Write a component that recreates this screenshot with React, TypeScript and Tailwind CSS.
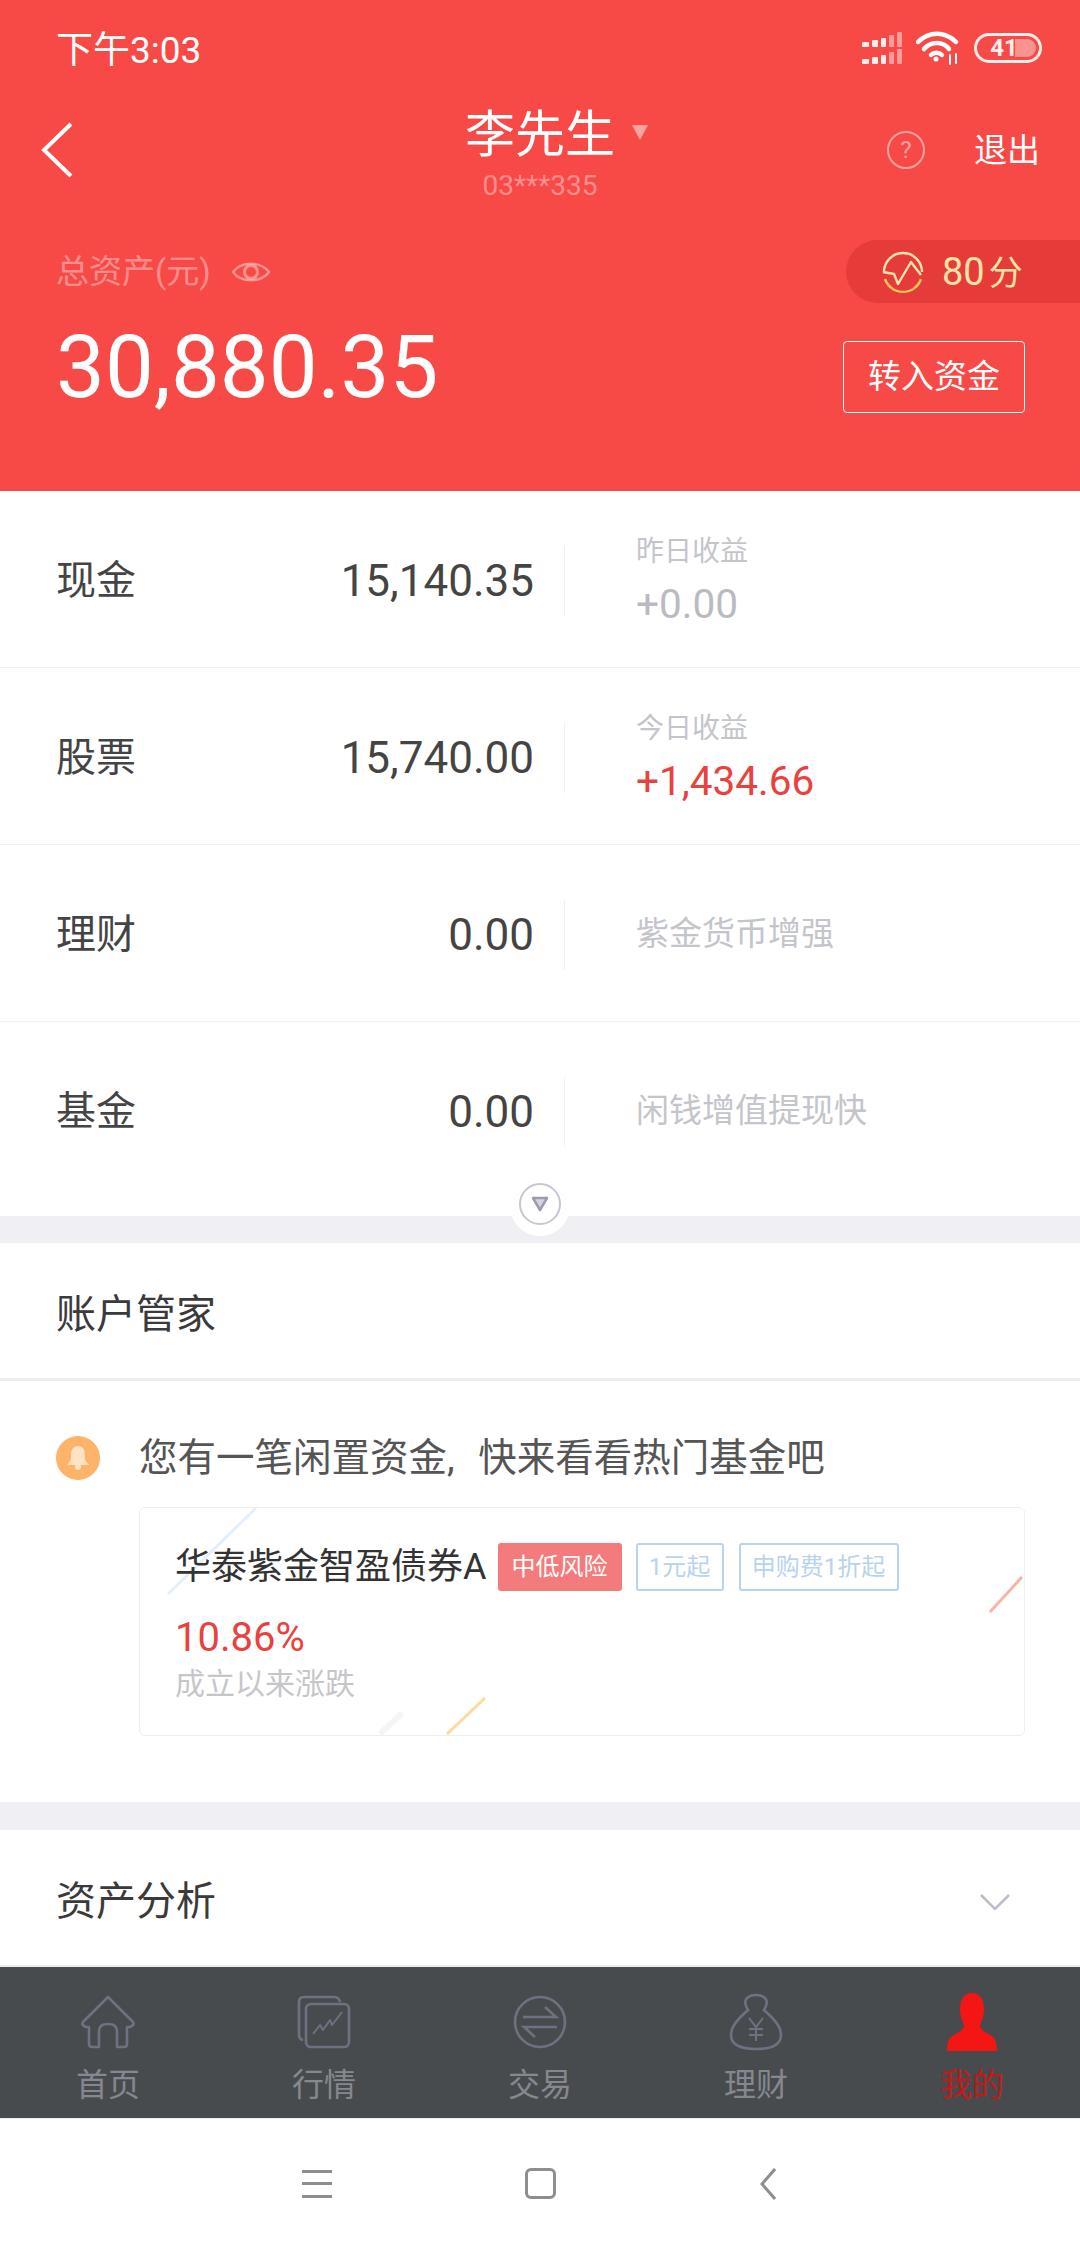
import React from 'react';

const FONT = "font-['Roboto','Noto_Sans_CJK_SC',sans-serif]";

const rows = [
  { label: '现金', value: '15,140.35', title: '昨日收益', amount: '+0.00', amountClass: 'text-[#b9bbc0]' },
  { label: '股票', value: '15,740.00', title: '今日收益', amount: '+1,434.66', amountClass: 'text-[#e8413e]' },
  { label: '理财', value: '0.00', hint: '紫金货币增强' },
  { label: '基金', value: '0.00', hint: '闲钱增值提现快' },
];

const SignalIcon = () => (
  <svg width="40" height="32" viewBox="0 0 40 32">
    {[0, 17].map((y) => (
      <g key={y} transform={`translate(0 ${y})`}>
        <rect x="0" y="10" width="7" height="5" rx="1" fill="#fff" fillOpacity="0.9" />
        <rect x="10" y="8" width="6" height="7" rx="1" fill="#fff" fillOpacity="0.9" />
        <rect x="19" y="6" width="5" height="9" rx="1" fill="#fff" fillOpacity="0.9" />
        <rect x="27" y="3" width="5" height="12" rx="1" fill="#fff" fillOpacity="0.45" />
        <rect x="35" y="0" width="5" height="15" rx="1" fill="#fff" fillOpacity="0.45" />
      </g>
    ))}
  </svg>
);

const WifiIcon = () => (
  <svg width="44" height="34" viewBox="0 0 44 34" fill="none" stroke="#fff" strokeWidth="4.5" strokeLinecap="round">
    <path d="M2 11 C13 0 29 0 40 11" />
    <path d="M8 18 C15 10 27 10 33 18" />
    <path d="M15 24 C18 21 23 21 26 24" />
    <circle cx="20" cy="28" r="2.5" fill="#fff" stroke="none" />
    <path d="M34 24v9M40 23v9" strokeWidth="2" />
  </svg>
);

const Battery = () => (
  <div className="relative h-[30px] w-[68px] overflow-hidden rounded-full border-[3px] border-white/90">
    <div className="absolute inset-y-[3px] left-[38px] right-[3px] rounded-r-full bg-white/40" />
    <div className="relative flex h-full items-center justify-center pr-[8px] text-[24px] font-bold text-white/90">41</div>
  </div>
);

const ScoreIcon = () => (
  <svg width="44" height="44" viewBox="0 0 44 44" fill="none" stroke="#fde3a7" strokeWidth="2.4">
    <path d="M3 22 A19 19 0 0 1 41 22" />
    <path d="M4 29 A19 19 0 0 0 40 29" stroke="#fbc65c" />
    <path d="M2 22 L13 24 L17 34 L30 12 L40 25" strokeLinejoin="round" />
  </svg>
);

const EyeIcon = () => (
  <svg width="40" height="24" viewBox="0 0 40 24" fill="none" stroke="#fff" strokeOpacity="0.4" strokeWidth="2.5">
    <path d="M2 12 C10 1 30 1 38 12 C30 23 10 23 2 12 Z" />
    <circle cx="20" cy="12" r="6.5" strokeWidth="3" />
  </svg>
);

const HomeIcon = () => (
  <svg width="56" height="56" viewBox="0 0 56 56" fill="none" stroke="#6e7180" strokeWidth="2.6" strokeLinejoin="round">
    <path d="M28 3 L53 28 Q55 31 50 33 H47 V50 Q47 53 44 53 H37 V37 Q37 30 28 30 Q19 30 19 37 V53 H12 Q9 53 9 50 V33 H6 Q1 31 3 28 Z" />
  </svg>
);

const MarketIcon = () => (
  <svg width="56" height="56" viewBox="0 0 56 56" fill="none" stroke="#6e7180" strokeWidth="2.6" strokeLinejoin="round">
    <path d="M7 46 Q3 45 3 41 V8 Q3 3 8 3 H38 Q43 3 44 8" />
    <rect x="10" y="10" width="43" height="43" rx="5" />
    <path d="M17 40 L24 31 L27 36 L34 26 L36 31 L46 18" strokeWidth="2" />
  </svg>
);

const TradeIcon = () => (
  <svg width="54" height="54" viewBox="0 0 54 54" fill="none" stroke="#6e7180" strokeWidth="2.6">
    <circle cx="27" cy="27" r="25" />
    <path d="M10 22 H43 L32 12" />
    <path d="M44 32 H11 L22 42" />
  </svg>
);

const MoneyBagIcon = () => (
  <svg width="54" height="58" viewBox="0 0 54 58" fill="none" stroke="#6e7180" strokeWidth="2.6">
    <path d="M19 17 C12 6 20 2 27 2 C34 2 42 6 35 17 C44 25 52 33 52 42 C52 52 42 56 27 56 C12 56 2 52 2 42 C2 33 10 25 19 17 Z" />
    <path d="M20 25 L27 34 L34 25 M27 34 V48 M20 36 H34 M20 42 H34" strokeWidth="2" />
  </svg>
);

const PersonIcon = () => (
  <svg width="52" height="58" viewBox="0 0 52 58" fill="#f41515">
    <path d="M26 0 C35 0 38 8 38 17 C38 24 35 28 34 33 C35 38 42 40 47 44 C50 47 51 52 51 58 H1 C1 52 2 47 5 44 C10 40 17 38 18 33 C17 28 14 24 14 17 C14 8 17 0 26 0 Z" />
  </svg>
);

const tabs = [
  { label: '首页', icon: <HomeIcon /> },
  { label: '行情', icon: <MarketIcon /> },
  { label: '交易', icon: <TradeIcon /> },
  { label: '理财', icon: <MoneyBagIcon /> },
  { label: '我的', icon: <PersonIcon />, active: true },
];

const App = () => {
  return (
    <div className={`flex h-[2248px] w-[1080px] flex-col overflow-hidden bg-white ${FONT}`}>
      {/* 头部 */}
      <div className="h-[491px] shrink-0 bg-[#f74a47] pl-14 text-white">
        <div className="flex h-[96px] items-center justify-between pr-[38px]">
          <span className="pt-[4px] text-[37px] leading-none">下午3:03</span>
          <div className="flex items-center gap-[14px]">
            <SignalIcon />
            <WifiIcon />
            <Battery />
          </div>
        </div>

        <div className="relative flex h-[112px] flex-col items-center pr-14">
          <svg className="absolute left-[-16px] top-[26px]" width="34" height="56" viewBox="0 0 34 56" fill="none" stroke="#fff" strokeWidth="4">
            <path d="M31 2 L4 28 L31 54" />
          </svg>
          <div className="relative mt-[11px] text-[50px] leading-[56px]">
            李先生
            <span className="absolute left-[167px] top-[18px] h-0 w-0 border-x-[8px] border-t-[15px] border-x-transparent border-t-white/50" />
          </div>
          <div className="mt-[7px] text-[28px] leading-[32px] text-white/40">03***335</div>
          <div className="absolute right-10 top-[35px] flex items-center gap-[49px]">
            <div className="flex h-[38px] w-[38px] items-center justify-center rounded-full border-2 border-white/50 text-[24px] leading-none text-white/50">?</div>
            <span className="text-[33px] leading-none">退出</span>
          </div>
        </div>

        <div className="mt-[32px] flex h-[63px] items-center justify-between">
          <div className="flex items-center gap-[20px]">
            <span className="text-[33px] leading-none text-white/40">总资产(元)</span>
            <EyeIcon />
          </div>
          <div className="flex h-[63px] w-[234px] items-center gap-[17px] rounded-l-full bg-[#e53c3a] pl-[35px] text-[#fde3a7]">
            <ScoreIcon />
            <span className="text-[38px] leading-none">
              80<span className="ml-[4px] text-[34px]">分</span>
            </span>
          </div>
        </div>

        <div className="mt-[38px] flex items-start justify-between pr-[55px]">
          <span className="-mt-[10px] text-[87px] leading-[72px]">30,880.35</span>
          <button className="flex h-[72px] w-[182px] items-center justify-center rounded-[4px] border border-white text-[33px] text-white">
            转入资金
          </button>
        </div>
      </div>

      {/* 资产列表 */}
      <div className="relative shrink-0">
        {rows.map((row, i) => (
          <div
            key={row.label}
            className={`flex items-center pl-14 ${i < rows.length - 1 ? 'h-[177px] border-b border-[#f0f0f3] pt-[3px]' : 'h-[194px] pb-[15px]'}`}
          >
            <span className="w-[120px] text-[40px] leading-none text-[#444]">{row.label}</span>
            <span className="w-[358px] text-right text-[44px] leading-none text-[#444]">{row.value}</span>
            <div className="ml-[30px] h-[70px] w-px bg-[#f0f0f3]" />
            <div className="ml-[71px]">
              {row.hint ? (
                <span className="text-[33px] leading-none text-[#c4c5ca]">{row.hint}</span>
              ) : (
                <div className="flex flex-col gap-[13px]">
                  <span className="text-[28px] leading-[34px] text-[#c4c5ca]">{row.title}</span>
                  <span className={`text-[40.5px] leading-[44px] ${row.amountClass}`}>{row.amount}</span>
                </div>
              )}
            </div>
          </div>
        ))}
      </div>

      {/* 展开按钮 */}
      <div className="relative h-[27px] shrink-0 bg-[#f0f0f4]">
        <div className="absolute left-[510px] top-[-44px] flex h-[64px] w-[60px] items-center justify-center rounded-full bg-white">
          <div className="flex h-[42px] w-[42px] items-center justify-center rounded-full border-2 border-[#c6c7d0]">
            <svg width="18" height="16" viewBox="0 0 18 16">
              <path d="M2 2 H16 L9 14 Z" fill="#d4d5de" stroke="#9b9dae" strokeWidth="2.5" strokeLinejoin="round" />
            </svg>
          </div>
        </div>
      </div>

      {/* 账户管家 */}
      <div className="flex h-[138px] shrink-0 items-center border-b-[3px] border-[#eeeef0] pl-14 pt-[8px] text-[40px] leading-none text-[#3a3a3a]">
        账户管家
      </div>
      <div className="h-[421px] shrink-0 pl-14 pr-[55px] pt-[55px]">
        <div className="flex h-[44px] items-center gap-[39px]">
          <div className="flex h-[44px] w-[44px] shrink-0 items-center justify-center rounded-full bg-[#fdb368]">
            <svg width="24" height="26" viewBox="0 0 24 26" fill="#ffe3c2">
              <path d="M12 1 C17 1 19 5 19 10 V15 L23 20 H1 L5 15 V10 C5 5 7 1 12 1 Z" />
              <circle cx="12" cy="22" r="3" />
            </svg>
          </div>
          <span className="text-[38.5px] leading-none text-[#555] [word-spacing:14px]">您有一笔闲置资金, 快来看看热门基金吧</span>
        </div>

        <div className="relative ml-[83px] mt-[27px] h-[229px] overflow-hidden rounded-[6px] border border-[#eeeef0] pl-[35px] pt-[35px]">
          <svg className="absolute left-0 top-0" width="886" height="229" viewBox="0 0 886 229" fill="none" strokeWidth="3">
            <path d="M116 0 L28 86" stroke="#e3f0fb" />
            <path d="M882 69 L850 104" stroke="#f7b3a8" />
            <path d="M345 190 L307 226" stroke="#fbdc9d" />
            <path d="M262 205 L240 226" stroke="#f5f5f6" strokeWidth="6" />
          </svg>
          <div className="relative flex h-[48px] items-center">
            <span className="text-[36px] leading-none text-[#333]">华泰紫金智盈债券A</span>
            <span className="ml-[11px] flex h-[48px] w-[124px] items-center justify-center rounded-[3px] bg-[#f47b7b] text-[24px] text-white">中低风险</span>
            <span className="ml-[14px] flex h-[48px] w-[88px] items-center justify-center rounded-[3px] border-2 border-[#b9d3ee] text-[24px] text-[#b9d3ee]">1元起</span>
            <span className="ml-[15px] flex h-[48px] w-[160px] items-center justify-center rounded-[3px] border-2 border-[#b9d3ee] text-[24px] text-[#b9d3ee]">申购费1折起</span>
          </div>
          <div className="relative mt-[25px] text-[40px] leading-[44px] text-[#e8413e]">10.86%</div>
          <div className="relative mt-[6px] text-[30px] leading-[36px] text-[#c6c6c9]">成立以来涨跌</div>
        </div>
      </div>

      <div className="h-[28px] shrink-0 bg-[#f0f0f4]" />

      {/* 资产分析 */}
      <div className="flex h-[137px] shrink-0 items-center justify-between border-b-2 border-[#eeeef0] pl-14 pr-[70px] pt-[8px]">
        <span className="text-[40px] leading-none text-[#3a3a3a]">资产分析</span>
        <svg width="30" height="16" viewBox="0 0 30 16" fill="none" stroke="#bcbdca" strokeWidth="2.5">
          <path d="M1 1 L15 15 L29 1" />
        </svg>
      </div>

      {/* 底部导航 */}
      <div className="grid h-[151px] shrink-0 grid-cols-5 bg-[#484b4e]">
        {tabs.map((tab) => (
          <div key={tab.label} className="flex flex-col items-center">
            <div className="mt-[25px] flex h-[60px] items-center justify-center">{tab.icon}</div>
            <span className={`mt-[17px] text-[32px] leading-none ${tab.active ? 'text-[#c01a1a]' : 'text-[#85888f]'}`}>{tab.label}</span>
          </div>
        ))}
      </div>

      {/* 系统导航栏 */}
      <div className="flex flex-1 items-center border-t border-[#eeeef0] pl-[302px]">
        <div className="flex h-[28px] w-[30px] flex-col justify-between">
          <div className="h-[3px] bg-[#8e8e8e]" />
          <div className="h-[3px] bg-[#8e8e8e]" />
          <div className="h-[3px] bg-[#8e8e8e]" />
        </div>
        <div className="ml-[193px] h-[31px] w-[31px] rounded-[6px] border-[3px] border-[#8e8e8e]" />
        <svg className="ml-[204px]" width="16" height="32" viewBox="0 0 16 32" fill="none" stroke="#8e8e8e" strokeWidth="3">
          <path d="M15 1 L2 16 L15 31" />
        </svg>
      </div>
    </div>
  );
};

export default App;
